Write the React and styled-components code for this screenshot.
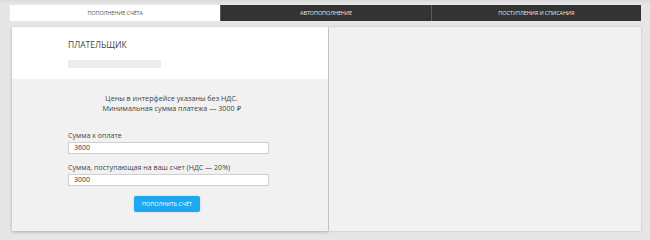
import { createGlobalStyle, styled } from "styled-components";

const Global = createGlobalStyle`
  html, body {
    margin: 0;
    padding: 0;
    background: #e6e6e6;
    font-family: "Open Sans", "Liberation Sans", sans-serif;
  }
`;

const tabs = ["Пополнение счёта", "Автопополнение", "Поступления и списания"];

const App = () => {
  return (
    <>
      <Global />
      <Page>
        <Tabs>
          {tabs.map((t, i) => (
            <Tab key={t} $active={i === 0}>
              {t}
            </Tab>
          ))}
        </Tabs>
        <Content>
          <Card>
            <Header>
              <Title>Плательщик</Title>
              <Blur />
            </Header>
            <Body>
              <Note>
                Цены в интерфейсе указаны без НДС.
                <br />
                Минимальная сумма платежа — 3000 ₽
              </Note>
              <Form>
                <Label>Сумма к оплате</Label>
                <Input defaultValue="3600" />
                <Label $gap>Сумма, поступающая на ваш счет (НДС — 20%)</Label>
                <Input defaultValue="3000" />
                <Button type="button">пополнить счёт</Button>
              </Form>
            </Body>
          </Card>
          <Side />
        </Content>
      </Page>
    </>
  );
};

export default App;

const Page = styled.div`
  width: 650px;
  height: 240px;
  box-sizing: border-box;
  padding: 5px 9px 0 10px;
  background: linear-gradient(#dadada 0px, #e6e6e6 4px);
`;

const Tabs = styled.div`
  display: grid;
  grid-template-columns: repeat(3, 1fr);
  height: 16px;
`;

const Tab = styled.div`
  display: flex;
  align-items: center;
  justify-content: center;
  background: ${(p) => (p.$active ? "#ffffff" : "#333333")};
  color: ${(p) => (p.$active ? "#555555" : "#e8e8e8")};
  border-left: ${(p) => (p.$active ? "none" : "1px solid #5a5a5a")};
  font-size: 5.5px;
  text-transform: uppercase;
  letter-spacing: -0.1px;
`;

const Content = styled.div`
  display: flex;
  gap: 1px;
  margin-top: 6px;
  padding-left: 2px;
  height: 204px;
`;

const Card = styled.div`
  width: 316px;
  display: flex;
  flex-direction: column;
  background: #f1f1f1;
  box-shadow: 0 1px 3px rgba(0, 0, 0, 0.25);
`;

const Header = styled.div`
  height: 52px;
  box-sizing: border-box;
  background: #ffffff;
  padding: 13px 0 0 56px;
`;

const Title = styled.div`
  font-size: 8.5px;
  color: #444444;
  text-transform: uppercase;
  line-height: 10px;
`;

const Blur = styled.div`
  width: 93px;
  height: 8px;
  margin-top: 10px;
  background: #ededed;
`;

const Body = styled.div`
  flex: 1;
  display: flex;
  flex-direction: column;
  align-items: center;
  padding-top: 14px;
`;

const Note = styled.div`
  font-size: 7.2px;
  line-height: 10px;
  color: #444444;
  text-align: center;
  margin-left: 3px;
`;

const Form = styled.div`
  width: 201px;
  display: flex;
  flex-direction: column;
  margin-top: 18px;
  margin-left: -3px;
`;

const Label = styled.div`
  font-size: 7.1px;
  line-height: 8px;
  color: #444444;
  margin-top: ${(p) => (p.$gap ? "9px" : "0")};
  margin-bottom: 2.5px;
`;

const Input = styled.input`
  height: 12.5px;
  box-sizing: border-box;
  border: 1px solid #cfcfcf;
  background: #ffffff;
  padding: 0 5px;
  font-family: "Open Sans", "Liberation Sans", sans-serif;
  font-size: 7px;
  color: #333333;
  outline: none;
`;

const Button = styled.button`
  align-self: center;
  margin-top: 9.5px;
  margin-left: -3px;
  width: 66px;
  height: 16.5px;
  border: none;
  border-radius: 2px;
  background: #1ea8f2;
  color: #ffffff;
  font-family: "Open Sans", "Liberation Sans", sans-serif;
  font-size: 5.5px;
  text-transform: uppercase;
  box-shadow: 0 0 2px rgba(0, 0, 0, 0.15);
  padding: 0;
`;

const Side = styled.div`
  width: 312px;
  background: #f1f1f1;
  box-shadow: 0 0 2px rgba(0, 0, 0, 0.2);
`;
